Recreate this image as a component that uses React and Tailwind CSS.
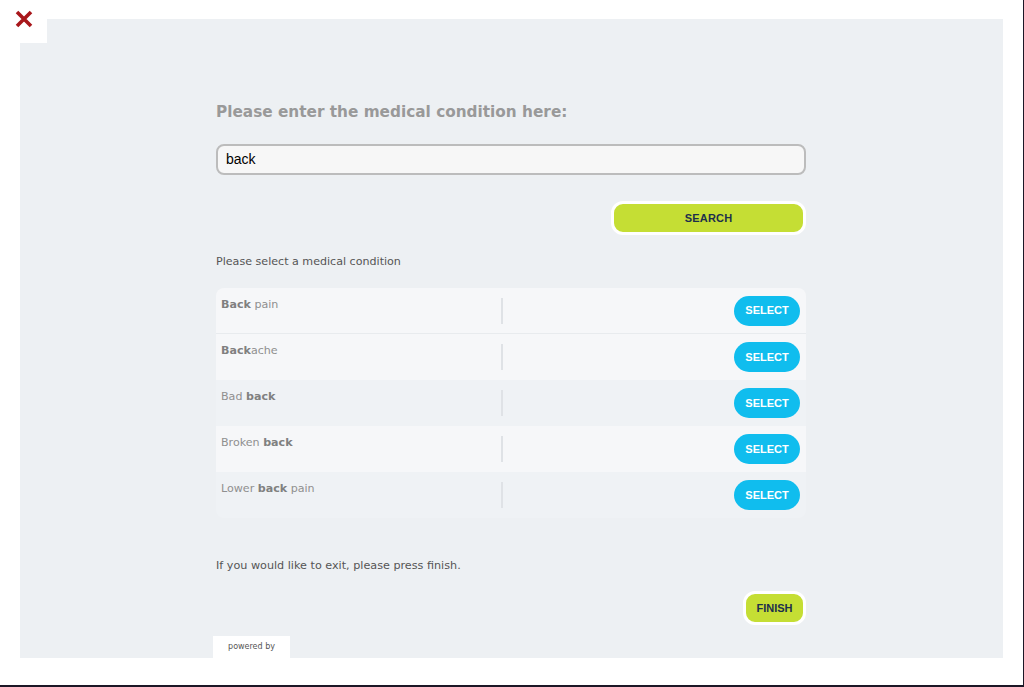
import React from "react";

const rows = [
  { parts: [["Back", true], [" pain", false]], bg: "bg-[#f6f7f9]" },
  { parts: [["Back", true], ["ache", false]], bg: "bg-[#f6f7f9]" },
  { parts: [["Bad ", false], ["back", true]], bg: "bg-[#eff2f5]" },
  { parts: [["Broken ", false], ["back", true]], bg: "bg-[#f6f7f9]" },
  { parts: [["Lower ", false], ["back", true], [" pain", false]], bg: "bg-[#eff2f5]" },
];

export default function App() {
  return (
    <div className="relative w-[1024px] h-[687px] bg-white border-r border-b-2 border-[#1c1726] overflow-hidden font-['DejaVu_Sans',Verdana,sans-serif]">
      <div className="pt-[19px] pl-[20px]">
        <div className="relative w-[983px] h-[639px] bg-[#edf0f3]">
          <div className="absolute left-0 top-0 w-[27px] h-[24px] bg-white" />
          <div className="ml-[196px] w-[590px] flex flex-col pt-[83px]">
            <h1 className="text-[15.3px] leading-[20px] font-bold text-[#999999]">
              Please enter the medical condition here:
            </h1>
            <div className="mt-[22px] h-[31px] rounded-[8px] border-2 border-[#bcbcbc] bg-[#f7f7f7] flex items-center pl-[8px] font-['Liberation_Sans',Arial,sans-serif] text-[14px] text-black">
              back
            </div>
            <div className="mt-[26px] flex justify-end">
              <button className="w-[195px] h-[34px] rounded-[12px] border-[3px] border-white bg-[#c5de34] font-['Liberation_Sans',Arial,sans-serif] font-bold text-[11px] text-[#1d2f4c] tracking-[0.2px]">
                SEARCH
              </button>
            </div>
            <p className="mt-[19px] text-[11.1px] leading-[15px] text-[#555555]">Please select a medical condition</p>
            <div className="mt-[19px] rounded-[8px] overflow-hidden">
              {rows.map((r, i) => (
                <div key={i} className={`relative h-[46px] flex ${r.bg} ${i === 0 ? "border-b border-[#e8ebee]" : ""}`}>
                  <div className="w-[285px] pl-[5px] pt-[9px] text-[11.1px] leading-[15px] text-[#8f8f8f]">
                    {r.parts.map(([t, b], j) =>
                      b ? (
                        <b key={j} className="font-bold text-[#808080]">{t}</b>
                      ) : (
                        <span key={j}>{t}</span>
                      )
                    )}
                  </div>
                  <div className="mt-[10px] w-[2px] h-[26px] bg-[#dfe2e6]" />
                  <div className="flex-1 flex items-center justify-end pr-[6px]">
                    <button className="w-[66px] h-[30px] rounded-full bg-[#10bdee] text-white font-['Liberation_Sans',Arial,sans-serif] font-bold text-[11px]">
                      SELECT
                    </button>
                  </div>
                </div>
              ))}
            </div>
            <p className="mt-[40px] text-[11.2px] leading-[15px] text-[#555555]">If you would like to exit, please press finish.</p>
            <div className="mt-[18px] flex justify-end">
              <button className="w-[63px] h-[34px] rounded-[12px] border-[3px] border-white bg-[#c5de34] font-['Liberation_Sans',Arial,sans-serif] font-bold text-[11px] text-[#1d2f4c]">
                FINISH
              </button>
            </div>
          </div>
          <div className="absolute left-[193px] bottom-0 w-[77px] h-[22px] bg-white flex items-center justify-center text-[8px] text-[#555555]">
            powered by
          </div>
        </div>
      </div>
      <div className="absolute left-[14px] top-[10px] w-[20px] h-[18px]">
        <svg width="20" height="18" viewBox="0 0 20 18">
          <path d="M3 2 L17 16 M17 2 L3 16" stroke="#a8171b" strokeWidth="3.6" strokeLinecap="butt" />
        </svg>
      </div>
    </div>
  );
}
